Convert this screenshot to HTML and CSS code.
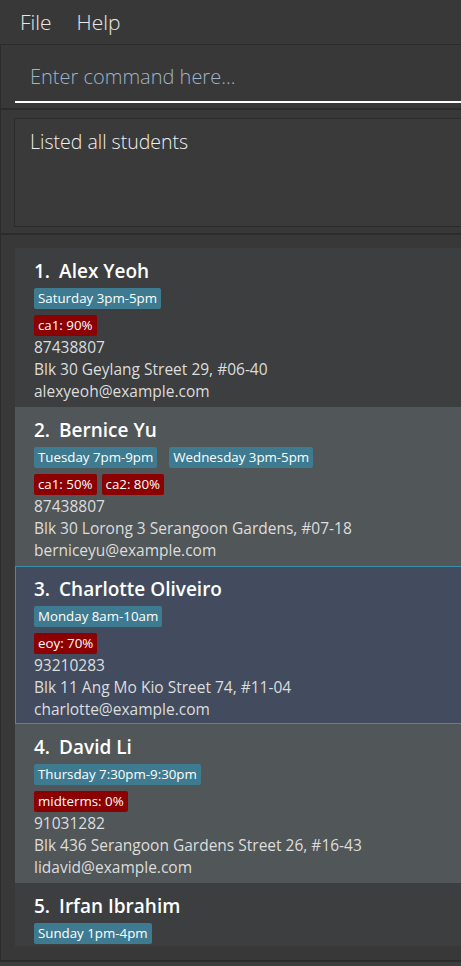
FILE: index.html
```html
<!DOCTYPE html>
<html>
<head>
<meta charset="utf-8">
<link rel="stylesheet" href="styles.css">
</head>
<body>
<div class="app">
  <div class="menubar">
    <span class="menu-item">File</span>
    <span class="menu-item">Help</span>
  </div>
  <div class="pane command-pane">
    <div class="command-field">Enter command here...</div>
  </div>
  <div class="pane result-pane">
    <div class="result-box">Listed all students</div>
  </div>
  <div class="pane list-pane">
    <div class="list">
      <div class="card odd">
        <div class="name"><span class="idx">1.</span><span>Alex Yeoh</span></div>
        <div class="tags"><span class="tag lesson">Saturday 3pm-5pm</span></div>
        <div class="tags grades"><span class="tag grade">ca1: 90%</span></div>
        <div class="line">87438807</div>
        <div class="line">Blk 30 Geylang Street 29, #06-40</div>
        <div class="line">alexyeoh@example.com</div>
      </div>
      <div class="card even">
        <div class="name"><span class="idx">2.</span><span>Bernice Yu</span></div>
        <div class="tags"><span class="tag lesson">Tuesday 7pm-9pm</span><span class="tag lesson">Wednesday 3pm-5pm</span></div>
        <div class="tags grades"><span class="tag grade">ca1: 50%</span><span class="tag grade">ca2: 80%</span></div>
        <div class="line">87438807</div>
        <div class="line">Blk 30 Lorong 3 Serangoon Gardens, #07-18</div>
        <div class="line">berniceyu@example.com</div>
      </div>
      <div class="card selected">
        <div class="name"><span class="idx">3.</span><span>Charlotte Oliveiro</span></div>
        <div class="tags"><span class="tag lesson">Monday 8am-10am</span></div>
        <div class="tags grades"><span class="tag grade">eoy: 70%</span></div>
        <div class="line">93210283</div>
        <div class="line">Blk 11 Ang Mo Kio Street 74, #11-04</div>
        <div class="line">charlotte@example.com</div>
      </div>
      <div class="card even">
        <div class="name"><span class="idx">4.</span><span>David Li</span></div>
        <div class="tags"><span class="tag lesson">Thursday 7:30pm-9:30pm</span></div>
        <div class="tags grades"><span class="tag grade">midterms: 0%</span></div>
        <div class="line">91031282</div>
        <div class="line">Blk 436 Serangoon Gardens Street 26, #16-43</div>
        <div class="line">lidavid@example.com</div>
      </div>
      <div class="card odd last">
        <div class="name"><span class="idx">5.</span><span>Irfan Ibrahim</span></div>
        <div class="tags"><span class="tag lesson">Sunday 1pm-4pm</span></div>
      </div>
    </div>
  </div>
  <div class="statusbar"></div>
</div>
</body>
</html>
```
FILE: styles.css
```css
html, body {
  margin: 0;
  padding: 0;
  background: #383838;
  overflow: hidden;
}
body {
  width: 461px;
  height: 966px;
  font-family: "Open Sans", "Noto Sans", sans-serif;
  color: #ffffff;
}
.app {
  width: 600px;
  display: flex;
  flex-direction: column;
}
.menubar {
  height: 44px;
  display: flex;
  align-items: center;
  gap: 25px;
  padding-left: 20px;
  background: #383838;
  border-bottom: 1px solid #2c2c2c;
}
.menu-item {
  font-size: 21px;
  color: #e8e8e8;
  font-weight: 300;
}
.pane {
  border-left: 1px solid #2c2c2c;
  background: #383838;
}
.command-pane {
  height: 63px;
  padding: 0 0 0 14px;
  border-bottom: 2px solid #2c2c2c;
  display: flex;
  flex-direction: column;
  justify-content: flex-end;
}
.command-field {
  height: 47px;
  box-sizing: border-box;
  border-bottom: 2px solid #ffffff;
  margin-bottom: 5px;
  padding-left: 15px;
  font-size: 20px;
  font-weight: 300;
  line-height: 42px;
  color: #9fb4c8;
}
.result-pane {
  height: 125px;
  padding: 8px 0 8px 13px;
  box-sizing: border-box;
  border-bottom: 2px solid #2c2c2c;
}
.result-box {
  height: 109px;
  box-sizing: border-box;
  border: 1px solid #2b2b2b;
  background: #3a3a3a;
  padding: 9px 0 0 15px;
  font-size: 19.5px;
  font-weight: 300;
  line-height: 28px;
  color: #f0f0f0;
}
.list-pane {
  height: 727px;
  padding: 13px 0 0 14px;
  box-sizing: border-box;
  border-bottom: 2px solid #2c2c2c;
}
.list {
  height: 698px;
  overflow: hidden;
  background: #3c3e3f;
}
.card {
  height: 159px;
  box-sizing: border-box;
  padding: 10px 0 0 19px;
  color: #dddddd;
}
.card.odd { background: #3c3e3f; }
.card.even { background: #515658; }
.card.selected {
  background: #424c5e;
  border: 1px solid #3d8ea7;
  padding: 9px 0 0 18px;
  height: 158px;
}
.name {
  height: 26px;
  line-height: 26px;
  font-size: 19px;
  font-weight: 600;
  color: #ffffff;
  display: flex;
  gap: 9px;
}
.tags {
  display: flex;
  gap: 12px;
  margin-top: 4px;
}
.tags.grades {
  gap: 5px;
  margin-top: 6px;
}
.tag {
  height: 21px;
  line-height: 21px;
  padding: 0 4px;
  font-size: 13.3px;
  border-radius: 2px;
  color: #ffffff;
}
.tag.lesson { background: #3e7b91; }
.tag.grade { background: #8b0000; }
.line {
  height: 22px;
  line-height: 22px;
  font-size: 15.5px;
  color: #dddddd;
}
.statusbar {
  height: 6px;
  background: #3c3c3c;
}
```
